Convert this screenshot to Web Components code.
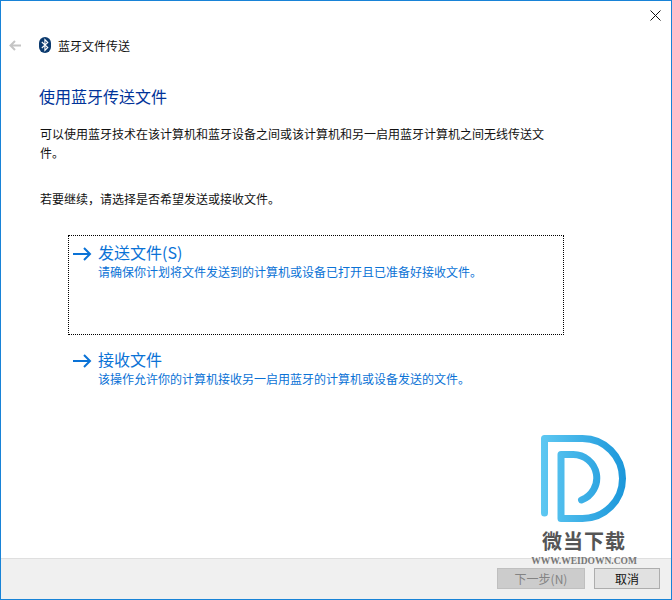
<!DOCTYPE html>
<html lang="zh">
<head>
<meta charset="utf-8">
<title>蓝牙文件传送</title>
<style>
	html, body { margin: 0; height: 100%; background: #fff; }
	body { font: 12px "Noto Sans CJK SC", "Liberation Sans", sans-serif; }
</style>
</head>
<body>
<wizard-window>
	<wizard-header slot="header">蓝牙文件传送</wizard-header>
	<h-title>使用蓝牙传送文件</h-title>
	<p-text style="margin-top:17px">可以使用蓝牙技术在该计算机和蓝牙设备之间或该计算机和另一启用蓝牙计算机之间无线传送文件。</p-text>
	<p-text style="margin-top:27px">若要继续，请选择是否希望发送或接收文件。</p-text>
	<command-link selected title-text="发送文件(S)" style="margin-top:27px">请确保你计划将文件发送到的计算机或设备已打开且已准备好接收文件。</command-link>
	<command-link title-text="接收文件" style="margin-top:7px">该操作允许你的计算机接收另一启用蓝牙的计算机或设备发送的文件。</command-link>
	<site-mark slot="overlay"></site-mark>
	<wizard-button slot="footer" disabled style="width:88px">下一步(N)</wizard-button>
	<wizard-button slot="footer" style="width:66px">取消</wizard-button>
</wizard-window>

<script>
class WizardWindow extends HTMLElement {
	constructor() {
		super();
		this.attachShadow({mode: 'open'}).innerHTML = `
		<style>
			:host {
				border: 1px solid #1883d7;
				box-sizing: border-box;
				display: flex;
				flex-direction: column;
				height: 600px;
				position: relative;
				width: 672px;
			}
			#bar {
				display: flex;
				height: 30px;
				justify-content: flex-end;
			}
			#close {
				display: block;
				margin: 9px 10px 0 0;
			}
			#body {
				display: flex;
				flex: 1;
				flex-direction: column;
				padding: 0 0 0 38px;
			}
			#footer {
				background: #f0f0f0;
				border-top: 1px solid #dfdfdf;
				box-sizing: border-box;
				display: flex;
				gap: 9px;
				height: 41px;
				justify-content: flex-end;
				padding: 9px 11px 0 0;
			}
		</style>
		<div id="bar">
			<svg id="close" width="11" height="11" viewBox="0 0 11 11"><path d="M.5.5l10 10M10.5.5l-10 10" stroke="#111" fill="none"/></svg>
		</div>
		<slot name="header"></slot>
		<div id="body"><slot></slot></div>
		<slot name="overlay"></slot>
		<div id="footer"><slot name="footer"></slot></div>`;
	}
}

class WizardHeader extends HTMLElement {
	constructor() {
		super();
		this.attachShadow({mode: 'open'}).innerHTML = `
		<style>
			:host {
				align-items: center;
				color: #111;
				display: flex;
				font-size: 12px;
				height: 30px;
				margin-top: -1px;
				padding-left: 8px;
			}
			svg { display: block; }
			#icon { margin: 0 7px 0 18px; }
		</style>
		<svg width="12" height="11" viewBox="0 0 12 11"><path d="M12 5.5H1.5M6 1L1.5 5.5 6 10" stroke="#c4c4c4" stroke-width="2" fill="none"/></svg>
		<svg id="icon" width="12" height="16" viewBox="0 0 12 16">
			<rect width="12" height="16" rx="6" fill="#0b3a6e"/>
			<path d="M2.8 5l6 5.5-2.9 3V2.5l2.9 3-6 5.5" stroke="#fff" stroke-width="1.1" fill="none"/>
		</svg>
		<span><slot></slot></span>`;
	}
}

class HTitle extends HTMLElement {
	constructor() {
		super();
		this.attachShadow({mode: 'open'}).innerHTML = `
		<style>
			:host {
				color: #003399;
				display: block;
				font-size: 16px;
				line-height: 22px;
				margin-top: 25px;
			}
		</style>
		<slot></slot>`;
	}
}

class PText extends HTMLElement {
	constructor() {
		super();
		this.attachShadow({mode: 'open'}).innerHTML = `
		<style>
			:host {
				color: #111;
				display: block;
				font-size: 12px;
				line-height: 19px;
				padding-left: 1px;
				width: 506px;
			}
		</style>
		<slot></slot>`;
	}
}

class CommandLink extends HTMLElement {
	constructor() {
		super();
		this.attachShadow({mode: 'open'}).innerHTML = `
		<style>
			:host {
				border: 1px solid transparent;
				box-sizing: border-box;
				color: #0a72d6;
				display: flex;
				gap: 6px;
				margin-left: 29px;
				padding: 6px 0 0 4px;
				width: 496px;
			}
			:host([selected]) {
				border: 1px dotted #000;
				height: 100px;
			}
			svg { display: block; flex: none; margin-top: 4px; }
			#title { font-size: 16px; line-height: 20px; }
			#desc { font-size: 12px; line-height: 17px; margin-top: 1px; }
		</style>
		<svg width="19" height="16" viewBox="0 0 19 16"><path d="M0 8h17M11 2l6 6-6 6" stroke="#0a72d6" stroke-width="2" fill="none"/></svg>
		<div>
			<div id="title"></div>
			<div id="desc"><slot></slot></div>
		</div>`;
	}

	connectedCallback() {
		this.shadowRoot.querySelector('#title').textContent = this.getAttribute('title-text');
	}
}

class WizardButton extends HTMLElement {
	constructor() {
		super();
		this.attachShadow({mode: 'open'}).innerHTML = `
		<style>
			:host {
				align-items: center;
				background: #e1e1e1;
				border: 1px solid #adadad;
				box-sizing: border-box;
				color: #111;
				display: flex;
				font-size: 12px;
				height: 21px;
				justify-content: center;
			}
			:host([disabled]) {
				background: #cccccc;
				border-color: #bfbfbf;
				color: #838383;
			}
		</style>
		<slot></slot>`;
	}
}

class SiteMark extends HTMLElement {
	constructor() {
		super();
		this.attachShadow({mode: 'open'}).innerHTML = `
		<style>
			:host {
				align-items: center;
				display: flex;
				flex-direction: column;
				left: 525px;
				position: absolute;
				top: 434px;
				width: 116px;
			}
			svg { display: block; }
			#name {
				color: #555;
				font-size: 20px;
				font-weight: 700;
				letter-spacing: 1px;
				line-height: 26px;
				margin-top: 6px;
				white-space: nowrap;
			}
			#url {
				color: #777;
				font: 700 9.5px "Liberation Serif", serif;
				line-height: 11px;
				margin-top: 2px;
				white-space: nowrap;
			}
		</style>
		<svg width="86" height="87" viewBox="0 0 86 87">
			<defs>
				<linearGradient id="g" gradientUnits="userSpaceOnUse" x1="0" x2="86" y1="0" y2="0">
					<stop offset="0" stop-color="#5ec8f2"/>
					<stop offset="1" stop-color="#1a96da"/>
				</linearGradient>
			</defs>
			<path d="M3.5 78V3.5H41.5A40 40 0 0 1 41.5 83.5H20V19.5H32A23.5 23.5 0 0 1 40.5 65"
				stroke="url(#g)" stroke-width="7" stroke-linecap="round" stroke-linejoin="round" fill="none"/>
		</svg>
		<div id="name">微当下载</div>
		<div id="url">WWW.WEIDOWN.COM</div>`;
	}
}

customElements.define('wizard-window', WizardWindow);
customElements.define('wizard-header', WizardHeader);
customElements.define('h-title', HTitle);
customElements.define('p-text', PText);
customElements.define('command-link', CommandLink);
customElements.define('wizard-button', WizardButton);
customElements.define('site-mark', SiteMark);
</script>
</body>
</html>
